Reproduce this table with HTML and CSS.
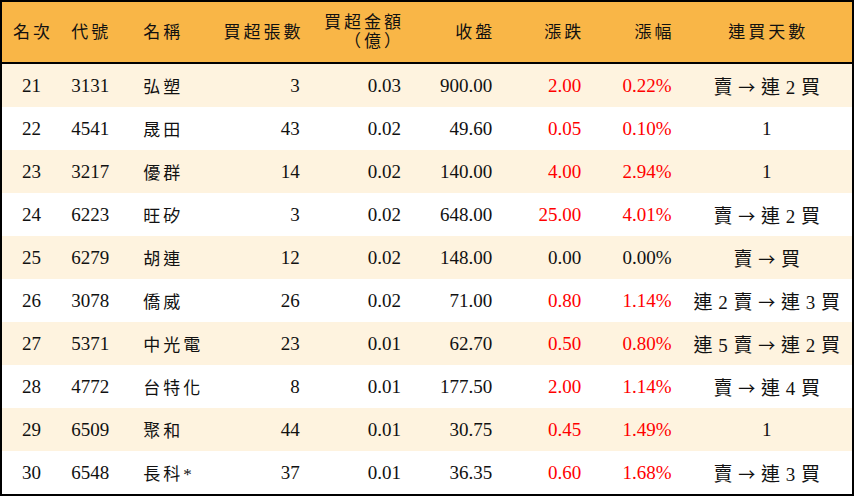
FILE: index.html
```html
<!DOCTYPE html>
<html lang="zh-Hant">
<head>
<meta charset="utf-8">
<link rel="stylesheet" href="styles.css">
</head>
<body>
<table class="rank">
  <colgroup>
    <col class="c-rank"><col class="c-code"><col class="c-name"><col class="c-vol"><col class="c-amt"><col class="c-close"><col class="c-chg"><col class="c-pct"><col class="c-days">
  </colgroup>
  <thead>
    <tr>
      <th class="ctr">名次</th>
      <th class="lft">代號</th>
      <th class="lft">名稱</th>
      <th class="rgt">買超張數</th>
      <th class="rgt two">買超金額<br>（億）</th>
      <th class="rgt">收盤</th>
      <th class="rgt">漲跌</th>
      <th class="rgt">漲幅</th>
      <th class="ctr">連買天數</th>
    </tr>
  </thead>
  <tbody>
    <tr><td class="ctr">21</td><td>3131</td><td class="name">弘塑</td><td class="rgt">3</td><td class="rgt">0.03</td><td class="rgt">900.00</td><td class="rgt up">2.00</td><td class="rgt up">0.22%</td><td class="ctr days">賣 <span class="arr">→</span> 連 2 買</td></tr>
    <tr><td class="ctr">22</td><td>4541</td><td class="name">晟田</td><td class="rgt">43</td><td class="rgt">0.02</td><td class="rgt">49.60</td><td class="rgt up">0.05</td><td class="rgt up">0.10%</td><td class="ctr days">1</td></tr>
    <tr><td class="ctr">23</td><td>3217</td><td class="name">優群</td><td class="rgt">14</td><td class="rgt">0.02</td><td class="rgt">140.00</td><td class="rgt up">4.00</td><td class="rgt up">2.94%</td><td class="ctr days">1</td></tr>
    <tr><td class="ctr">24</td><td>6223</td><td class="name">旺矽</td><td class="rgt">3</td><td class="rgt">0.02</td><td class="rgt">648.00</td><td class="rgt up">25.00</td><td class="rgt up">4.01%</td><td class="ctr days">賣 <span class="arr">→</span> 連 2 買</td></tr>
    <tr><td class="ctr">25</td><td>6279</td><td class="name">胡連</td><td class="rgt">12</td><td class="rgt">0.02</td><td class="rgt">148.00</td><td class="rgt">0.00</td><td class="rgt">0.00%</td><td class="ctr days">賣 <span class="arr">→</span> 買</td></tr>
    <tr><td class="ctr">26</td><td>3078</td><td class="name">僑威</td><td class="rgt">26</td><td class="rgt">0.02</td><td class="rgt">71.00</td><td class="rgt up">0.80</td><td class="rgt up">1.14%</td><td class="ctr days">連 2 賣 <span class="arr">→</span> 連 3 買</td></tr>
    <tr><td class="ctr">27</td><td>5371</td><td class="name">中光電</td><td class="rgt">23</td><td class="rgt">0.01</td><td class="rgt">62.70</td><td class="rgt up">0.50</td><td class="rgt up">0.80%</td><td class="ctr days">連 5 賣 <span class="arr">→</span> 連 2 買</td></tr>
    <tr><td class="ctr">28</td><td>4772</td><td class="name">台特化</td><td class="rgt">8</td><td class="rgt">0.01</td><td class="rgt">177.50</td><td class="rgt up">2.00</td><td class="rgt up">1.14%</td><td class="ctr days">賣 <span class="arr">→</span> 連 4 買</td></tr>
    <tr><td class="ctr">29</td><td>6509</td><td class="name">聚和</td><td class="rgt">44</td><td class="rgt">0.01</td><td class="rgt">30.75</td><td class="rgt up">0.45</td><td class="rgt up">1.49%</td><td class="ctr days">1</td></tr>
    <tr><td class="ctr">30</td><td>6548</td><td class="name">長科*</td><td class="rgt">37</td><td class="rgt">0.01</td><td class="rgt">36.35</td><td class="rgt up">0.60</td><td class="rgt up">1.68%</td><td class="ctr days">賣 <span class="arr">→</span> 連 3 買</td></tr>
  </tbody>
</table>
</body>
</html>
```

FILE: styles.css
```css
html, body {
  margin: 0;
  padding: 0;
  background: #ffffff;
}

.rank {
  width: 854px;
  border-collapse: collapse;
  table-layout: fixed;
  border: 2px solid #000000;
  font-family: "Liberation Serif", "Noto Sans CJK TC", serif;
  font-size: 19px;
  color: #111111;
}

.c-rank { width: 60px; }
.c-code { width: 72px; }
.c-name { width: 80px; }
.c-vol { width: 96px; }
.c-amt { width: 101px; }
.c-close { width: 91px; }
.c-chg { width: 89px; }
.c-pct { width: 90px; }
.c-days { width: 171px; }

.rank thead tr {
  background: #f9b647;
  height: 62px;
}

.rank th {
  font-weight: normal;
  font-size: 17px;
  letter-spacing: 3px;
  padding: 0 7px 0 10px;
  white-space: nowrap;
  border-bottom: 2px solid #000000;
  vertical-align: middle;
  line-height: 19px;
}

.rank td {
  height: 43px;
  padding: 0 10px;
  white-space: nowrap;
  vertical-align: middle;
  text-align: left;
}

.rank tbody tr:nth-child(odd) {
  background: #fef3df;
}

.rank .ctr { text-align: center; }
.rank .lft { text-align: left; }
.rank .rgt { text-align: right; }

.rank td.name {
  font-size: 17px;
  letter-spacing: 3px;
}

.rank td.days {
  font-size: 19px;
  word-spacing: 1px;
}

.rank .arr {
  font-family: "Noto Sans CJK TC", sans-serif;
  font-size: 17px;
}

.rank .up { color: #ff0000; }
```
